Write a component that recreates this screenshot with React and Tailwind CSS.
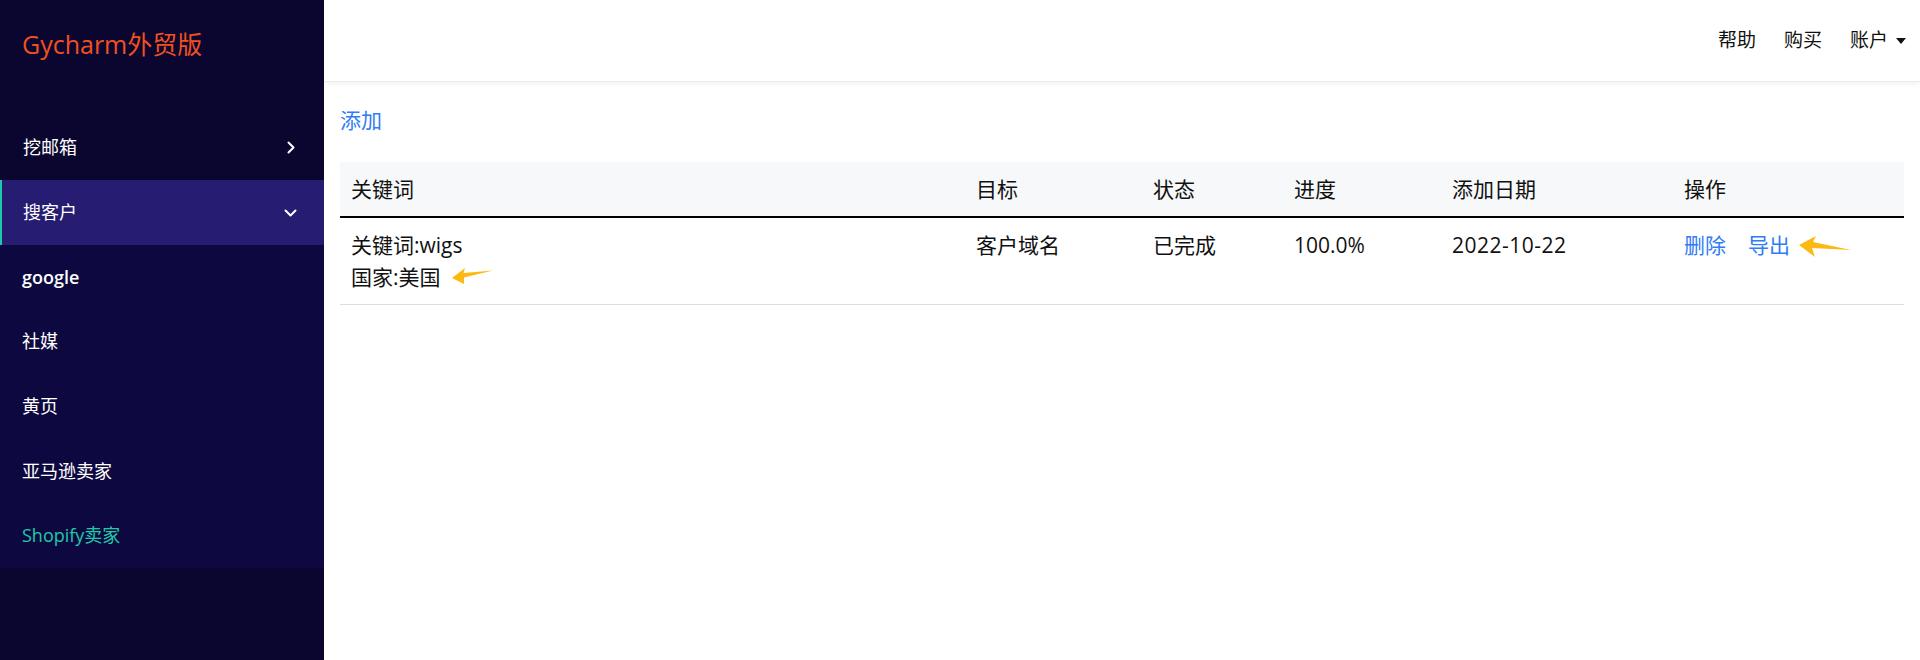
import React from "react";

const font = { fontFamily: '"Open Sans", "Noto Sans CJK SC", "Noto Sans", sans-serif' };

function ChevronRight() {
  return (
    <svg width="8" height="13" viewBox="0 0 8 13" fill="none">
      <path d="M1.5 1.5 L6.5 6.5 L1.5 11.5" stroke="white" strokeWidth="2" strokeLinecap="round" strokeLinejoin="round" />
    </svg>
  );
}
function ChevronDown() {
  return (
    <svg width="13" height="8" viewBox="0 0 13 8" fill="none">
      <path d="M1.5 1.5 L6.5 6.5 L11.5 1.5" stroke="white" strokeWidth="2" strokeLinecap="round" strokeLinejoin="round" />
    </svg>
  );
}

function Arrow1() {
  return (
    <svg width="41" height="16" viewBox="0 0 41 16">
      <path d="M0 10 L13 0 L11.5 5 L41 2.5 L12 9.5 L12 16 Z" fill="#fdb913" />
    </svg>
  );
}
function Arrow2() {
  return (
    <svg width="52" height="21" viewBox="0 0 52 21">
      <path d="M0 9 L17 0 L14 6 L52 14 L13 12 L16 21 Z" fill="#fdb913" />
    </svg>
  );
}

export default function App() {
  const sub = ["社媒", "黄页", "亚马逊卖家"];
  return (
    <div className="flex w-[1920px] h-[660px] overflow-hidden bg-white" style={font}>
      <aside className="w-[324px] h-full bg-[#0a0630] flex flex-col shrink-0">
        <div className="h-[115px] pl-[22px] pt-[26px]">
          <div className="text-[25px] leading-[36px] text-[#f1501f]">Gycharm外贸版</div>
        </div>
        <div className="h-[65px] flex items-center justify-between pl-[23px] pr-[29px] text-white text-[18px]">
          <span>挖邮箱</span>
          <ChevronRight />
        </div>
        <div className="h-[65px] flex items-center justify-between pl-[21px] pr-[27px] text-white text-[18px] bg-[#261d72] border-l-2 border-[#20c9a6]">
          <span>搜客户</span>
          <ChevronDown />
        </div>
        <div className="bg-[#0d0940] flex flex-col">
          <div className="h-[64.6px] flex items-center pl-[22px] text-white text-[18px] font-semibold">google</div>
          {sub.map((s) => (
            <div key={s} className="h-[64.6px] flex items-center pl-[22px] text-white text-[18px]">
              {s}
            </div>
          ))}
          <div className="h-[64.6px] flex items-center pl-[22px] text-[#20c9a6] text-[18px]">
            Shopify卖家
          </div>
        </div>
      </aside>
      <main className="flex-1 flex flex-col min-w-0">
        <header className="h-[82px] shrink-0 bg-white flex items-center justify-end pr-[14px] shadow-[0_2px_6px_rgba(0,0,0,0.06)] relative z-10 border-b border-[#ececec]">
          <nav className="flex items-center gap-[28px] text-[19px] text-[#111]">
            <span>帮助</span>
            <span>购买</span>
            <span className="flex items-center gap-[8px]">
              账户
              <svg width="10" height="6" viewBox="0 0 10 6">
                <path d="M0 0 L10 0 L5 6 Z" fill="#111" />
              </svg>
            </span>
          </nav>
        </header>
        <div className="flex-1 px-4 pt-[22px] text-[21px] leading-[32px] text-[#111] bg-white">
          <div className="text-[#2f7cf6] mb-[26px]">添加</div>
          <table className="w-[1564px] border-collapse table-fixed">
            <colgroup>
              <col className="w-[624px]" />
              <col className="w-[177px]" />
              <col className="w-[141px]" />
              <col className="w-[158px]" />
              <col className="w-[232px]" />
              <col className="w-[232px]" />
            </colgroup>
            <thead>
              <tr className="bg-[#f7f8fa] border-b-2 border-black">
                <th className="text-left font-normal px-[11px] py-[11px]">关键词</th>
                <th className="text-left font-normal px-[12px] py-[11px]">目标</th>
                <th className="text-left font-normal px-[12px] py-[11px]">状态</th>
                <th className="text-left font-normal px-[12px] py-[11px]">进度</th>
                <th className="text-left font-normal px-[12px] py-[11px]">添加日期</th>
                <th className="text-left font-normal px-[12px] py-[11px]">操作</th>
              </tr>
            </thead>
            <tbody>
              <tr className="border-b border-[#dedede] align-top">
                <td className="px-[11px] py-[11px]">
                  <div>关键词:wigs</div>
                  <div className="flex items-center">
                    <span>国家:美国</span>
                    <span className="ml-[11px] mt-[-3px]"><Arrow1 /></span>
                  </div>
                </td>
                <td className="px-[12px] py-[11px]">客户域名</td>
                <td className="px-[12px] py-[11px]">已完成</td>
                <td className="px-[12px] py-[11px]">100.0%</td>
                <td className="px-[12px] py-[11px] tracking-[0.5px]">2022-10-22</td>
                <td className="px-[12px] py-[11px]">
                  <div className="flex items-center text-[#2f7cf6]">
                    <span>删除</span>
                    <span className="ml-[22px]">导出</span>
                    <span className="ml-[9px] mt-[3px]"><Arrow2 /></span>
                  </div>
                </td>
              </tr>
            </tbody>
          </table>
        </div>
      </main>
    </div>
  );
}
